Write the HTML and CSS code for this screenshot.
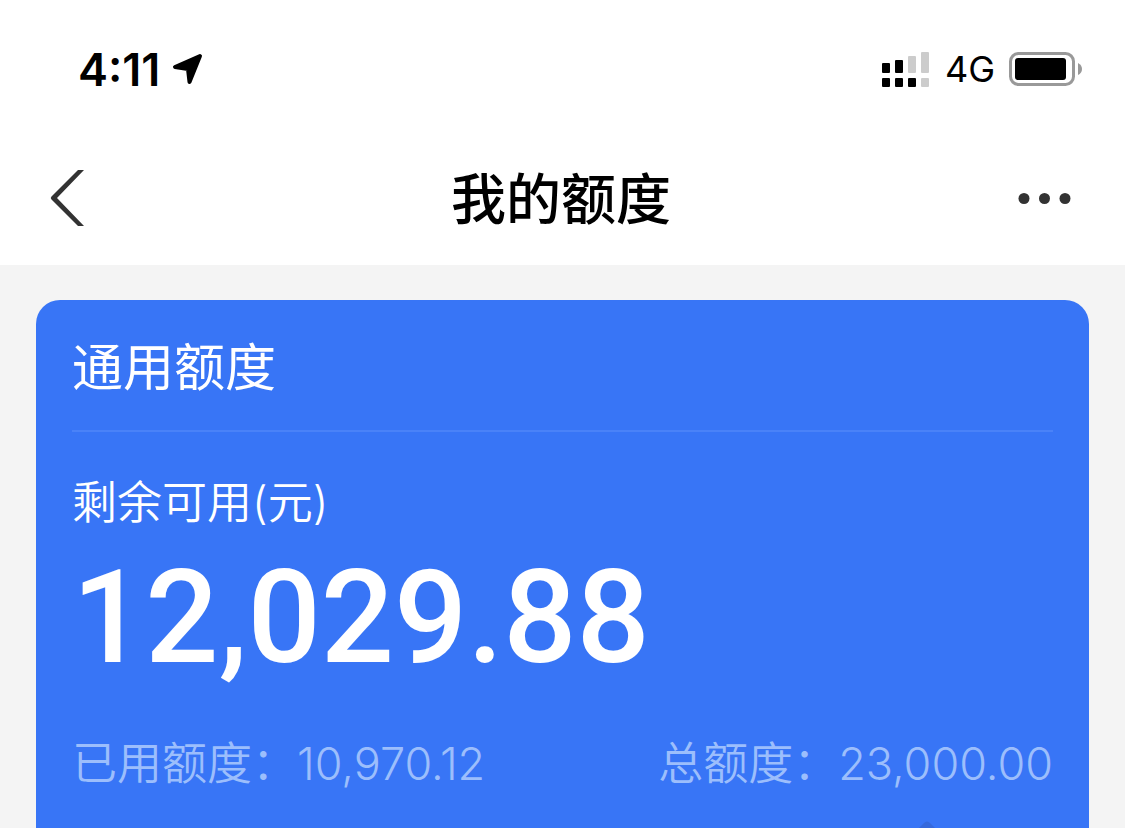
FILE: index.html
```
<!DOCTYPE html>
<html lang="zh-CN">
<head>
    <meta charset="UTF-8">
    <meta name="viewport" content="width=device-width, initial-scale=1.0">
    <title>我的额度</title>
    <link rel="stylesheet" href="styles.css">
</head>
<body>
    <div class="status-bar">
        <div class="status-left">
            <span class="time">4:11</span>
            <svg class="location" width="32" height="32" viewBox="0 0 32 32">
                <path d="M28 3 L3 14 L16 16 L17.500 29 Z" fill="#000" stroke="#000" stroke-width="4" stroke-linejoin="round"/>
            </svg>
        </div>
        <div class="status-right">
            <!-- Dual SIM signal -->
            <svg class="signal" width="48" height="36" viewBox="0 0 48 36">
                <g fill="#000">
                    <rect x="0" y="12" width="8" height="10" rx="1"/>
                    <rect x="13" y="9" width="8" height="13" rx="1"/>
                    <rect x="0" y="27" width="8" height="9" rx="1"/>
                    <rect x="13" y="27" width="8" height="9" rx="1"/>
                    <rect x="26" y="27" width="8" height="9" rx="1"/>
                </g>
                <g fill="#ccc">
                    <rect x="26" y="5" width="8" height="17" rx="1"/>
                    <rect x="39" y="1" width="8" height="21" rx="1"/>
                    <rect x="39" y="27" width="8" height="9" rx="1"/>
                </g>
            </svg>
            <span class="network">4G</span>
            <svg class="battery" width="74" height="36" viewBox="0 0 74 36">
                <rect x="1.500" y="2.500" width="63" height="31" rx="8" fill="none" stroke="#999" stroke-width="3"/>
                <rect x="6" y="7" width="51" height="22" rx="3" fill="#000"/>
                <path d="M69 12 Q73 14 73 18 Q73 22 69 24 Z" fill="#999"/>
            </svg>
        </div>
    </div>

    <header class="nav">
        <button class="nav-button" type="button" aria-label="返回">
            <svg width="36" height="58" viewBox="0 0 36 58">
                <path d="M28 0 H34 L7 28 L34 56 H28 L1.500 29.500 Q0 28 1.500 26.500 Z" fill="#333"/>
            </svg>
        </button>
        <h1>我的额度</h1>
        <button class="nav-button more" type="button" aria-label="更多">
            <svg width="54" height="12" viewBox="0 0 54 12">
                <g fill="#333">
                    <circle cx="6" cy="5.500" r="5.500"/>
                    <circle cx="26.500" cy="5.500" r="5.500"/>
                    <circle cx="47" cy="5.500" r="5.500"/>
                </g>
            </svg>
        </button>
    </header>

    <main>
        <section class="card">
            <h2>通用额度</h2>
            <p class="label">剩余可用(元)</p>
            <p class="amount">12,029.88</p>
            <div class="summary">
                <span>已用额度：10,970.12</span>
                <span>总额度：23,000.00</span>
            </div>
            <svg class="arrow" width="36" height="8" viewBox="0 0 36 8">
                <path d="M9 8 L15 2 Q18 -1 21 2 L27 8 Z" fill="#3569dc"/>
            </svg>
        </section>
    </main>
</body>
</html>
```
FILE: styles.css
```
* {
    box-sizing: border-box;
}
body {
    margin: 0;
    min-height: 100vh;
    display: flex;
    flex-direction: column;
    background-color: #f4f4f4;
    color: #000;
    font-family: Inter, "Noto Sans CJK SC", sans-serif;
}
h1, h2, p {
    margin: 0;
}
svg {
    display: block;
}

/* Status bar */
.status-bar {
    display: flex;
    justify-content: space-between;
    align-items: center;
    height: 132px;
    padding: 6px 42px 0 78px;
    background-color: #fff;
}
.status-left, .status-right {
    display: flex;
    align-items: center;
}
.time {
    font-size: 45px;
    font-weight: 600;
}
.location {
    margin-left: 12px;
}
.network {
    margin: 0 14px 0 15px;
    font-size: 36px;
    font-weight: 400;
}

/* Title bar */
.nav {
    display: grid;
    grid-template-columns: 1fr auto 1fr;
    align-items: center;
    height: 133px;
    padding: 0 53px 0 50px;
    background-color: #fff;
}
.nav-button {
    justify-self: start;
    padding: 0;
    border: none;
    background: none;
    cursor: pointer;
}
.more {
    justify-self: end;
}
h1 {
    font-size: 55px;
    font-weight: 500;
    line-height: 80px;
}

/* Quota card */
main {
    flex: 1;
    display: flex;
    flex-direction: column;
    padding: 35px 36px 0;
}
.card {
    flex: 1;
    padding: 0 36px;
    border-radius: 24px 24px 0 0;
    background-color: #3875f6;
    color: #fff;
}
h2 {
    padding-top: 6px;
    border-bottom: 2px solid #4a82f8;
    font-size: 51px;
    font-weight: 400;
    line-height: 124px;
}
.label {
    margin-top: 38px;
    font-size: 45px;
    font-weight: 350;
    line-height: 66px;
}
.amount {
    font-family: Roboto, sans-serif;
    font-size: 129px;
    font-weight: 500;
    line-height: 164px;
}
.summary {
    display: flex;
    justify-content: space-between;
    margin-top: 34px;
    color: #9cbefc;
    font-size: 45px;
    font-weight: 350;
    line-height: 60px;
}
.arrow {
    margin: 27px 108px 0 auto;
}
```
